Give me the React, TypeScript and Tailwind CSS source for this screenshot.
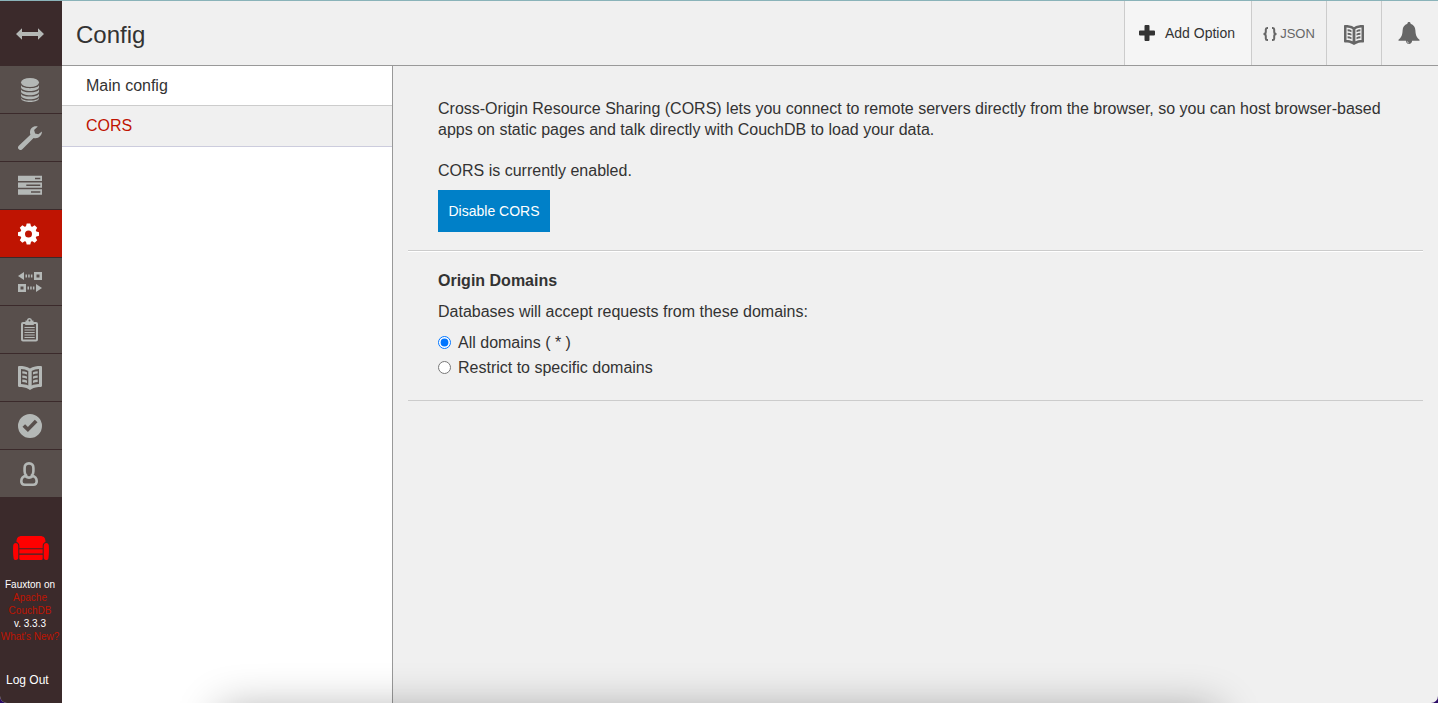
import { useState } from "react";
import type { ReactNode } from "react";

function Icon({ children }: { children: ReactNode }) {
  return (
    <svg viewBox="0 0 24 24" className="size-6" fill="currentColor" aria-hidden="true">
      {children}
    </svg>
  );
}

const bookShape = (
  <path
    fillRule="evenodd"
    d="M0 1.200C0 .5.5 0 1.200 0 5 0 9 .6 12 2.600 15 .6 19 0 22.800 0c.7 0 1.200.5 1.200 1.200v18.600c0 .7-.4 1.200-1.100 1.200-3.600 0-6.900.4-9.200 2.100L12 24l-1.700-.9C8 21.400 4.700 21 1.100 21 .4 21 0 20.500 0 19.800zM3 3v15.100c2.700.1 5.200.5 7.300 1.500V5C8.300 3.700 5.700 3.100 3 3zm18 0c-2.700.1-5.300.7-7.300 2v14.600c2.100-1 4.600-1.400 7.300-1.500zM4.300 5.200c1.600.1 3.300.4 4.700 1v2.400c-1.400-.6-3.100-.9-4.700-1zm0 4.200c1.600.1 3.300.4 4.700 1v2.300c-1.400-.6-3.100-.9-4.700-1zm0 4.200c1.600.1 3.300.4 4.700 1v2.400c-1.400-.6-3.100-.9-4.700-1zM19.700 5.200v2.400c-1.600.1-3.300.4-4.700 1V6.200c1.400-.6 3.100-.9 4.700-1zm0 4.200v2.300c-1.600.1-3.300.4-4.700 1v-2.300c1.400-.6 3.100-.9 4.700-1zm0 4.200v2.400c-1.600.1-3.300.4-4.700 1v-2.400c1.400-.6 3.100-.9 4.700-1z"
  />
);

const gearTeeth = [0, 45, 90, 135];

const navItems: { label: string; icon: ReactNode }[] = [
  {
    label: "Databases",
    icon: (
      <>
        <ellipse cx="12" cy="4.500" rx="9" ry="4.500" />
        <path d="M3 7c1 4.200 17 4.200 18 0v2.200c-1 5-17 5-18 0zM3 11.200c1 4.200 17 4.200 18 0v2.200c-1 5-17 5-18 0zM3 15.400c1 4.200 17 4.200 18 0v2.200c-1 5-17 5-18 0zM3 19.400c1 4.200 17 4.200 18 0v1.200c-1 4.600-17 4.600-18 0z" />
      </>
    ),
  },
  {
    label: "Setup",
    icon: (
      <path d="M19.800.6C15.600-.6 12 2.200 12 6.200c0 1 .1 1.700.4 2.500L.8 19.700a2.500 2.500 0 0 0 0 3.500 2.500 2.500 0 0 0 3.500 0L15.600 11.900c4.300 1.300 8.200-1.600 8.400-6.300l-3.700 2.600-3.200-.8-1-3.300z" />
    ),
  },
  {
    label: "Active Tasks",
    icon: (
      <path
        fillRule="evenodd"
        d="M0 1.700h24v5.300H0zm17 2v1.500h5.300V3.700zM0 8.500h24v5.300H0zm8.300 2V12h14v-1.500zM0 15.300h24v5.400H0zm13 2v1.500h9.300v-1.500z"
      />
    ),
  },
  {
    label: "Configuration",
    icon: (
      <>
        <circle cx="10.500" cy="12" r="5.800" fill="none" stroke="currentColor" strokeWidth="4.600" />
        {gearTeeth.map((angle) => (
          <path
            key={angle}
            transform={`rotate(${angle} 10.5 12)`}
            d="M8.700 1.500h3.600l.9 3.500-.7 1.500h-4L7.800 5zM8.700 22.500h3.600l.9-3.500-.7-1.500h-4L7.800 19z"
          />
        ))}
      </>
    ),
  },
  {
    label: "Replication",
    icon: (
      <path
        fillRule="evenodd"
        d="M6 2v8L0 6zM7.500 4.500H9v3H7.500zM10.200 4.500h1.500v3h-1.500zM12.900 4.500h1.500v3h-1.500zM16 2h8v8h-8zm2.500 2.500v3h3v-3zM0 14h8v8H0zm2.500 2.500v3h3v-3zM9.500 16.500H11v3H9.500zM12.200 16.500h1.500v3h-1.500zM14.900 16.500h1.500v3h-1.500zM18 14l6 4-6 4z"
      />
    ),
  },
  {
    label: "News",
    icon: (
      <>
        <path
          fillRule="evenodd"
          d="M9 2.500a2.500 2.500 0 0 1 5 0h1.500V4H18a2 2 0 0 1 2 2v15.500a2 2 0 0 1-2 2H5a2 2 0 0 1-2-2V6a2 2 0 0 1 2-2h2.500V2.500zM11.500 1.500a1 1 0 1 0 0 2 1 1 0 0 0 0-2zM5 6v15.500h13V6h-2.200v1H7.200V6z"
        />
        <path d="M6.500 9h10.200v1H6.500zM6.500 11.500h10.200v1H6.500zM6.500 14h10.200v1H6.500zM6.500 16.500h10.200v1H6.500zM6.500 19h10.200v1H6.500z" />
      </>
    ),
  },
  { label: "Documentation", icon: bookShape },
  {
    label: "Verify",
    icon: (
      <path
        fillRule="evenodd"
        d="M12 0a12 12 0 1 1 0 24 12 12 0 0 1 0-24zM16.800 5.700l-6.900 7.200-2.800-2.700L4.500 12.800l5.400 5.300 9.600-9.800z"
      />
    ),
  },
  {
    label: "User Management",
    icon: (
      <path
        fill="none"
        stroke="currentColor"
        strokeWidth="2.600"
        strokeLinejoin="round"
        d="M11 1.400c-3 0-4.400 2-4.400 4.600v3.200c0 1.900.6 3.400 1.700 4.300C5.500 14.200 3.300 16.300 3.300 19.200c0 2.300 1.200 3.500 3.500 3.500h8.400c2.300 0 3.500-1.200 3.500-3.500 0-2.900-2.200-5-5-5.700 1.100-.9 1.700-2.400 1.700-4.300V6c0-2.600-1.400-4.600-4.400-4.600zM7.300 14.200c2.200 1.700 5.200 1.700 7.400 0"
      />
    ),
  },
];

function Sidebar() {
  return (
    <aside className="flex w-[62px] shrink-0 flex-col bg-[#3b2a2b]">
      <button aria-label="Toggle navigation" className="flex h-[65px] shrink-0 items-center justify-center pr-[3px] text-[#b4b8b6]">
        <svg viewBox="0 0 28 12" className="h-3 w-7" fill="currentColor" aria-hidden="true">
          <path d="M6 .3v3.700h16V.3L28 6l-6 5.700V8H6v3.700L0 6z" />
        </svg>
      </button>
      <nav className="flex flex-col gap-px">
        {navItems.map((item) => (
          <a
            key={item.label}
            href={"#" + item.label}
            aria-label={item.label}
            className={
              item.label === "Configuration"
                ? "flex h-[47px] justify-center bg-[#bf1402] pt-3 pr-0.5 text-white"
                : "flex h-[47px] justify-center bg-[#584f4c] pt-3 pr-0.5 text-[#b4b8b6]"
            }
          >
            <Icon>{item.icon}</Icon>
          </a>
        ))}
      </nav>
      <footer className="mt-auto pb-3.5 text-white">
        <svg viewBox="0 0 38 24" className="mx-auto mb-[18px] h-6 w-[38px]" fill="#ff0000" aria-hidden="true">
          <path d="M4.500 6C4.500 2 6 0 10 0h18c4 0 5.500 2 5.500 6-1.800.5-2.800 2-2.800 4v2.300H7.300V10C7.300 8 6.300 6.500 4.500 6z" />
          <path d="M7.300 13.300h23.400v4.200H7.300zM7.300 18.700h23.400v3.800q0 1.500-1.500 1.500H9q-1.700 0-1.700-1.500z" />
          <path d="M3.700 7C5.300 7 6.300 8.300 6.300 10v11.500c0 1.500-.8 2.500-2.300 2.500h-.8c-1.200 0-1.600-1-1.700-2.500C1 18 .9 13 1.200 9.500 1.400 8 2.300 7 3.700 7zM34.300 7c-1.600 0-2.600 1.300-2.600 3v11.500c0 1.500.8 2.500 2.300 2.500h.8c1.200 0 1.600-1 1.700-2.500.5-3.500.6-8.500.3-12-.2-1.500-1.100-2.500-2.500-2.500z" />
        </svg>
        <p className="pr-0.5 text-center text-[10px] leading-[13px] whitespace-nowrap">
          Fauxton on
          <a href="#couchdb" className="block text-[#bf1402]">
            Apache
            <br />
            CouchDB
          </a>
          v. 3.3.3
          <a href="#news" className="block text-[#bf1402]">
            What's New?
          </a>
        </p>
        <a href="#logout" className="mt-7 block pl-1.5 text-xs leading-[18px]">
          Log Out
        </a>
      </footer>
    </aside>
  );
}

function Header() {
  return (
    <header className="flex h-[65px] shrink-0 border-b border-[#999] bg-[#f0f0f0]">
      <h1 className="mr-auto flex items-center pt-1 pl-3.5 text-2xl">Config</h1>
      <button className="flex w-[127px] items-center gap-2.5 border-l border-[#ccc] bg-[#f5f5f5] pl-3.5 text-sm">
        <svg viewBox="0 0 16 16" className="size-4" fill="currentColor" aria-hidden="true">
          <path d="M6.500 0h3q1 0 1 1v4.500H15q1 0 1 1v3q0 1-1 1h-4.500V15q0 1-1 1h-3q-1 0-1-1v-4.500H1q-1 0-1-1v-3q0-1 1-1h4.500V1q0-1 1-1z" />
        </svg>
        Add Option
      </button>
      <a href="#json" className="flex w-[75px] items-center justify-center gap-[3px] border-l border-[#ccc] pt-0.5 text-[13px] text-[#666]">
        <svg viewBox="0 0 14 14" className="size-3.5" fill="none" stroke="currentColor" strokeWidth="2" aria-hidden="true">
          <path d="M5 1H4.200Q2.800 1 2.800 2.500v2.200Q2.800 7 .5 7q2.300 0 2.300 2.300v2.200q0 1.500 1.400 1.500H5M9 1h.8q1.400 0 1.400 1.500v2.200Q11.200 7 13.500 7q-2.300 0-2.300 2.300v2.200q0 1.500-1.400 1.500H9" />
        </svg>
        JSON
      </a>
      <a href="#docs" aria-label="Documentation" className="flex w-[55px] items-center justify-center border-l border-[#ccc] pt-1 text-[#666]">
        <svg viewBox="0 0 24 24" className="size-5" fill="currentColor" aria-hidden="true">
          {bookShape}
        </svg>
      </a>
      <button aria-label="Notifications" className="flex w-[57px] items-center justify-center border-l border-[#ccc] pr-0.5 text-[#666]">
        <svg viewBox="0 0 22 22" className="size-[22px]" fill="currentColor" aria-hidden="true">
          <path d="M11 0c1 0 1.600.7 1.600 1.700 3 .8 4.600 3.300 4.800 6.800.2 5 1.600 7.500 4.100 9.200v1.100h-7.400C14 20.700 12.800 22 11 22s-3-1.300-3.100-3.200H.5v-1.100c2.500-1.700 3.900-4.200 4.100-9.200.2-3.500 1.800-6 4.800-6.800C9.400.7 10 0 11 0z" />
          <path d="M9.200 19.300q.2 1.500 1.600 1.700" fill="none" stroke="#f0f0f0" strokeWidth=".7" />
        </svg>
      </button>
    </header>
  );
}

export default function App() {
  const [origin, setOrigin] = useState("all");
  return (
    <div className="min-h-screen bg-[#2b0a66] font-['Liberation_Sans',Arial,sans-serif] text-[#333]">
      <div className="relative flex min-h-screen overflow-hidden rounded-b-[7px] border-t border-[#8ab3b9] bg-[#f0f0f0]">
        <Sidebar />
        <div className="flex min-w-0 flex-1 flex-col">
          <Header />
          <div className="flex flex-1">
            <nav className="w-[331px] shrink-0 border-r border-[#999] bg-white leading-5">
              <a href="#main" className="block border-b border-[#ccc] pt-2.5 pb-[9px] pl-6">
                Main config
              </a>
              <a href="#cors" className="block border-b border-[#ccd] bg-[#f0f0f0] py-2.5 pl-6 text-[#bf1402]">
                CORS
              </a>
            </nav>
            <main className="min-w-0 flex-1 px-[15px] pt-8 leading-[21px]">
              <section className="border-b border-[#ccc] px-[30px] pb-[18px]">
                <p>
                  Cross-Origin Resource Sharing (CORS) lets you connect to remote servers directly from the browser, so you
                  can host browser-based apps on static pages and talk directly with CouchDB to load your data.
                </p>
                <p className="mt-5 mb-[9px]">CORS is currently enabled.</p>
                <button className="flex h-[42px] w-28 items-center justify-center bg-[#0080c8] text-sm text-white">
                  Disable CORS
                </button>
              </section>
              <section className="border-t border-b border-t-white border-b-[#ccc] px-[30px] pt-[18px] pb-5">
                <h2 className="font-bold">Origin Domains</h2>
                <p className="mt-2.5">Databases will accept requests from these domains:</p>
                <div className="mt-2 flex flex-col leading-[25px]">
                  <label className="flex items-center gap-[7px]">
                    <input type="radio" name="origin" className="size-[13px]" checked={origin === "all"} onChange={() => setOrigin("all")} />
                    All domains ( * )
                  </label>
                  <label className="flex items-center gap-[7px]">
                    <input type="radio" name="origin" className="size-[13px]" checked={origin === "restrict"} onChange={() => setOrigin("restrict")} />
                    Restrict to specific domains
                  </label>
                </div>
              </section>
            </main>
          </div>
        </div>
        <div className="pointer-events-none absolute inset-x-[220px] top-full h-20 shadow-[0_6px_44px_0_rgba(0,0,0,0.32)]" />
      </div>
    </div>
  );
}
